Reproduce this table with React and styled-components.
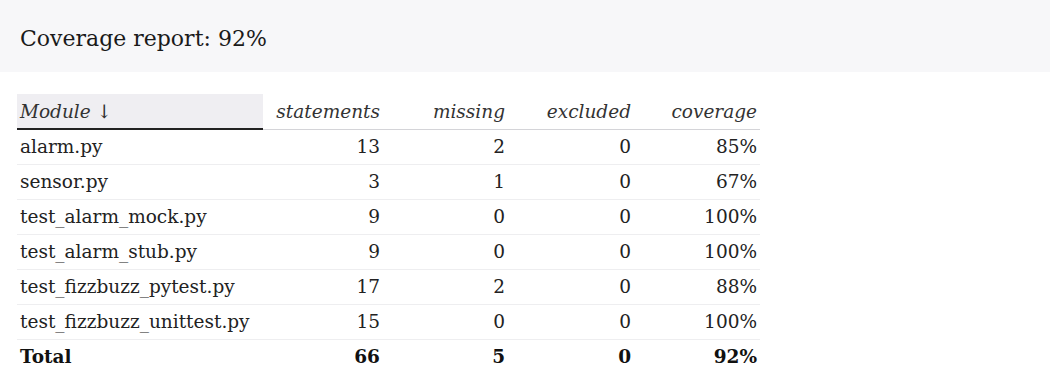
import React from "react";
import styled, { createGlobalStyle } from "styled-components";

const GlobalStyle = createGlobalStyle`
  html, body {
    margin: 0;
    padding: 0;
    background: #ffffff;
    font-family: Georgia, "DejaVu Serif", serif;
    color: #222;
  }
`;

const rows = [
  { name: "alarm.py", stmts: 13, miss: 2, excl: 0, cov: "85%" },
  { name: "sensor.py", stmts: 3, miss: 1, excl: 0, cov: "67%" },
  { name: "test_alarm_mock.py", stmts: 9, miss: 0, excl: 0, cov: "100%" },
  { name: "test_alarm_stub.py", stmts: 9, miss: 0, excl: 0, cov: "100%" },
  { name: "test_fizzbuzz_pytest.py", stmts: 17, miss: 2, excl: 0, cov: "88%" },
  { name: "test_fizzbuzz_unittest.py", stmts: 15, miss: 0, excl: 0, cov: "100%" },
];

const App = () => {
  return (
    <Page>
      <GlobalStyle />
      <Header>
        <Title>Coverage report: 92%</Title>
      </Header>
      <Content>
        <Table>
          <thead>
            <tr>
              <Th sorted w={246}>Module ↓</Th>
              <Th num w={120}>statements</Th>
              <Th num w={125}>missing</Th>
              <Th num w={126}>excluded</Th>
              <Th num w={126}>coverage</Th>
            </tr>
          </thead>
          <tbody>
            {rows.map((r) => (
              <Row key={r.name}>
                <Td>{r.name}</Td>
                <Td num>{r.stmts}</Td>
                <Td num>{r.miss}</Td>
                <Td num>{r.excl}</Td>
                <Td num>{r.cov}</Td>
              </Row>
            ))}
          </tbody>
          <tfoot>
            <TotalRow>
              <Td>Total</Td>
              <Td num>66</Td>
              <Td num>5</Td>
              <Td num>0</Td>
              <Td num>92%</Td>
            </TotalRow>
          </tfoot>
        </Table>
      </Content>
    </Page>
  );
};

const Page = styled.div`
  width: 1050px;
  height: 379px;
  overflow: hidden;
`;

const Header = styled.header`
  background: #f7f7f9;
  height: 72px;
  box-sizing: border-box;
  padding: 0 20px;
  display: flex;
  align-items: center;
`;

const Title = styled.h1`
  margin: 0;
  font-size: 22px;
  font-weight: normal;
  color: #1a1a1a;
  padding-top: 4px;
`;

const Content = styled.main`
  padding: 22px 0 0 17px;
`;

const Table = styled.table`
  border-collapse: collapse;
  width: 743px;
  table-layout: fixed;
  font-size: 18.5px;
`;

const Th = styled.th`
  height: 35px;
  box-sizing: border-box;
  padding: 0 3px;
  font-weight: normal;
  font-style: italic;
  color: #333;
  text-align: ${(p) => (p.num ? "right" : "left")};
  width: ${(p) => p.w}px;
  background: ${(p) => (p.sorted ? "#efeef2" : "transparent")};
  border-bottom: ${(p) => (p.sorted ? "2px solid #222" : "1px solid #d4d4d8")};
`;

const Td = styled.td`
  height: 35px;
  box-sizing: border-box;
  padding: 0 3px;
  text-align: ${(p) => (p.num ? "right" : "left")};
  white-space: nowrap;
`;

const Row = styled.tr`
  border-bottom: 1px solid #eeeef0;
`;

const TotalRow = styled.tr`
  font-weight: bold;
  color: #111;
`;

export default App;
